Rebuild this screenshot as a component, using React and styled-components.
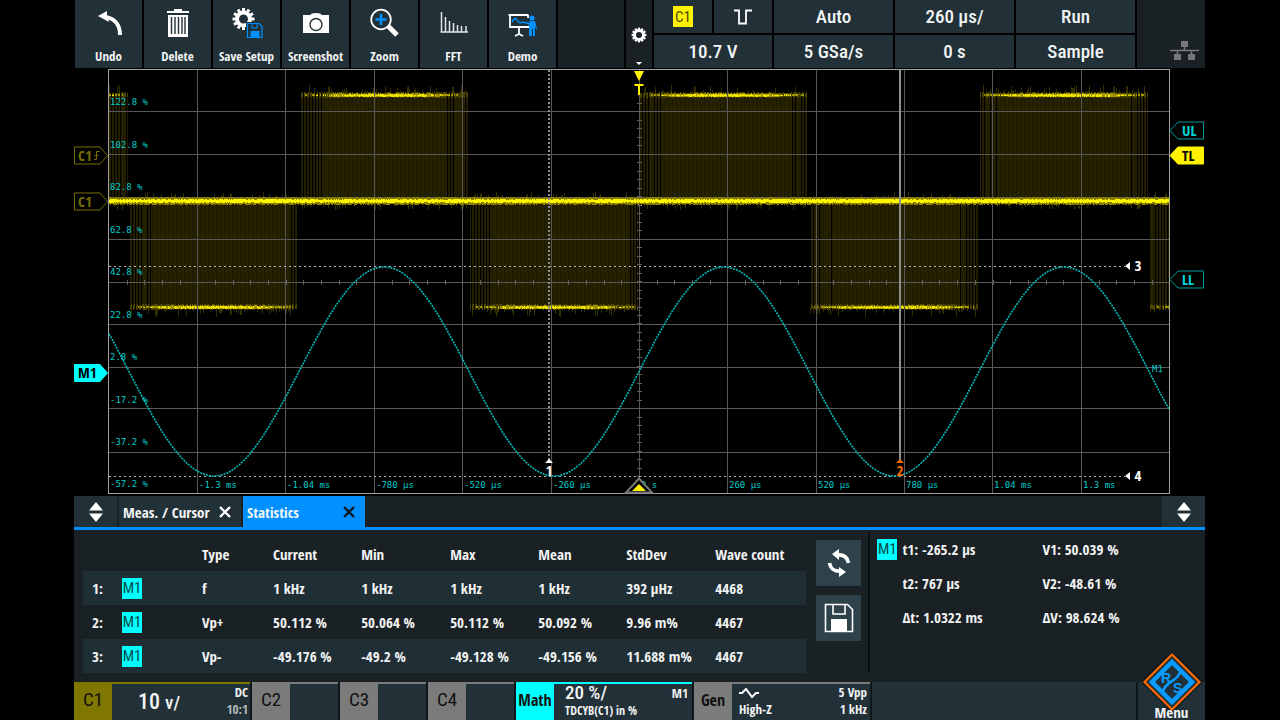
import React from "react";
import styled, { createGlobalStyle, css } from "styled-components";

const CYAN = "#00ffff";
const YELLOW = "#fff200";
const BLUE = "#0090ff";
const TILE = "#223138";
const DARK = "#1a2124";

const GlobalStyle = createGlobalStyle`
  * {
    box-sizing: border-box;
  }
  body {
    margin: 0;
    background: #000;
    color: #f2f4f4;
    font-family: "Open Sans Condensed", "Roboto Condensed", "Liberation Sans Narrow", "Open Sans", sans-serif;
  }
  button {
    margin: 0;
    padding: 0;
    border: none;
    color: inherit;
    font: inherit;
    cursor: pointer;
  }
`;

// ---------- icons ----------

const gearTeeth = (cx, cy, r, count, size) =>
  Array.from({ length: count }, (_, i) => (
    <rect
      key={i}
      x={cx - size / 2}
      y={cy - r}
      width={size}
      height={size}
      fill="#fff"
      transform={`rotate(${(360 / count) * i} ${cx} ${cy})`}
    />
  ));

const UndoIcon = () => (
  <Icon viewBox="0 0 36 32">
    <path d="M7 8 16 3v4l2 7z" fill="#fff" />
    <path d="M14 9C23 10 29 16 29 27" fill="none" stroke="#fff" strokeWidth="4" />
  </Icon>
);

const DeleteIcon = () => (
  <Icon viewBox="0 0 36 32">
    <path d="M7 3h7V1h8v2h7v2H7zM8 7h20v22H8z" fill="#fff" />
    <path d="M11.5 9v17M15 9v17M18.500 9v17M22 9v17M25 9v17" stroke={TILE} strokeWidth="1.4" />
  </Icon>
);

const SaveSetupIcon = () => (
  <Icon viewBox="0 0 36 32">
    <circle cx="14.500" cy="11" r="6.500" fill="none" stroke="#fff" strokeWidth="4" />
    {gearTeeth(14.5, 11, 11, 12, 3)}
    <path d="M17 14h17v17H17z" fill={TILE} />
    <path d="M18.500 15.500h11.500l3 3v11h-14.500z" fill="none" stroke={BLUE} strokeWidth="1.2" />
    <path d="M21.500 23h9v7h-9z" fill={BLUE} />
    <path d="M23 16v4h5v-4" fill="none" stroke={BLUE} />
  </Icon>
);

const CameraIcon = () => (
  <Icon viewBox="0 0 36 32">
    <path d="M5 7h7l2-1.500q4-1 8 0l2 1.500h7v18H5z" fill="#fff" />
    <circle cx="18" cy="16.500" r="6" fill="none" stroke={TILE} strokeWidth="1.400" />
  </Icon>
);

const ZoomIcon = () => (
  <Icon viewBox="0 0 36 32">
    <circle cx="14" cy="11.500" r="9.800" fill="none" stroke="#fff" strokeWidth="1.800" />
    <path d="M14 6v11M8.500 11.500h11" stroke={BLUE} strokeWidth="2.600" />
    <path d="M21 18l9 9" stroke="#fff" strokeWidth="5" />
  </Icon>
);

const FftIcon = () => (
  <Icon viewBox="0 0 36 32">
    <path
      d="M5.500 4v20M9.500 9v15M13.500 13v11M17.500 15v9M21.500 17v7M25.500 18v6M30 18v6M4.500 24h27.500"
      fill="none"
      stroke="#e4e8e8"
      strokeWidth="1.500"
    />
  </Icon>
);

const DemoIcon = () => (
  <Icon viewBox="0 0 36 32">
    <path d="M3.500 7h20M5 7v12h19M23 7v3M14 19v8M10 28l4-2 4 2" fill="none" stroke="#fff" strokeWidth="1.800" />
    <path d="M7 14q3-6 5-2t6 2l7 2" fill="none" stroke={BLUE} strokeWidth="1.500" />
    <circle cx="27" cy="10" r="2.600" fill={BLUE} />
    <path d="M21 14l3 1 1-2h5l2 8h-1l-1-3v10h-2v-7h-1v7h-3V17z" fill={BLUE} />
  </Icon>
);

const SettingsIcon = () => (
  <GearSvg viewBox="0 0 26 68" aria-hidden="true">
    <circle cx="13" cy="35" r="4.500" fill="none" stroke="#fff" strokeWidth="3" />
    {gearTeeth(13, 35, 7.4, 12, 2.2)}
    <path d="M10 62h6l-3 3z" fill="#fff" />
  </GearSvg>
);

const FloppyIcon = () => (
  <svg width="30" height="30" viewBox="0 0 30 30">
    <path d="M1.500 1.500h22l5 5v22h-27z" fill="none" stroke="#fff" strokeWidth="1.600" />
    <path d="M9 2v9h12V2" fill="none" stroke="#fff" strokeWidth="1.600" />
    <path d="M7 16h16v13H7z" fill="#fff" />
  </svg>
);

const RefreshIcon = () => (
  <svg width="26" height="28" viewBox="0 0 26 28">
    <path d="M11 6Q21 5 22.500 14M15 22Q5 23 3.500 14" fill="none" stroke="#fff" strokeWidth="3.600" />
    <path d="M6 5l7-5v11zM20 23l-7-5v10z" fill="#fff" />
  </svg>
);

const NetworkIcon = () => (
  <svg width="29" height="19" viewBox="0 0 29 19">
    <path d="M11 0h7v6h-7zM4 13h7v6H4zM18 13h7v6h-7z" fill="#777" />
    <path d="M0 9.500h29M14.500 5v4M7.500 9v5M21.500 9v5" stroke="#777" strokeWidth="1.600" />
  </svg>
);

const UpDownIcon = () => (
  <svg width="16" height="20" viewBox="0 0 16 20">
    <path d="M8 0l7 8.500H1zM8 20l7-8.500H1z" fill="#fff" />
  </svg>
);

const CloseIcon = () => (
  <svg width="12" height="12" viewBox="0 0 12 12">
    <path d="M1 1l10 10M11 1L1 11" stroke="currentColor" strokeWidth="2.400" />
  </svg>
);

const PulseIcon = () => (
  <svg width="18" height="18" viewBox="0 0 18 18">
    <path d="M0 2.500h5v13h7v-13h6" fill="none" stroke="#fff" strokeWidth="1.800" />
  </svg>
);

const WaveIcon = () => (
  <svg width="20" height="12" viewBox="0 0 20 12">
    <path d="M0 6h3l4-4 6 8 4-4h3" fill="none" stroke="#fff" strokeWidth="2" />
  </svg>
);

const LogoIcon = () => (
  <Logo viewBox="0 0 64 64" aria-hidden="true">
    <path d="M32 1L63 32 32 63 1 32z" fill="#12191c" />
    <path d="M32 4.500L59.500 32 32 59.500 4.500 32z" fill={TILE} stroke="#ff6a00" strokeWidth="2.200" />
    <path d="M32 12L52 32 32 52 12 32z" fill="none" stroke="#0a9bff" strokeWidth="4.500" />
    <path d="M41 20Q39 27 32 31T22 43" fill="none" stroke="#0a9bff" strokeWidth="2.600" />
    <text x="21" y="33" fontSize="14" fontWeight="bold" fontFamily="Liberation Sans, sans-serif" fill="#0a9bff">R</text>
    <text x="33" y="43" fontSize="14" fontWeight="bold" fontFamily="Liberation Sans, sans-serif" fill="#0a9bff">S</text>
  </Logo>
);

// ---------- waveform ----------

const LEFT = 109;
const RIGHT = 1169;
const CENTER = 639;
const PERIOD = 340;
const VLINES = [197, 285, 374, 462, 551, 639, 727, 816, 904, 992, 1081];
const HLINES = [111, 154, 197, 239, 282, 324, 367, 408, 452];
const XLABELS = ["-1.3 ms", "-1.04 ms", "-780 µs", "-520 µs", "-260 µs", "0 s", "260 µs", "520 µs", "780 µs", "1.04 ms", "1.3 ms"];
const YLABELS = ["122.8 %", "102.8 %", "82.8 %", "62.8 %", "42.8 %", "22.8 %", "2.8 %", "-17.2 %", "-37.2 %", "-57.2 %"];
const YLABEL_Y = [105, 148, 190, 233, 275, 318, 360, 403, 445, 487];

// repeatable noise
const rand = (n) => {
  const v = Math.sin(n * 12.9898) * 43758.5453;
  return v - Math.floor(v);
};

const buildTrace = () => {
  const t = { fill: "", stripe: "", weak: "", mid: "", strong: "", spikes: "", base: "", baseEdge: "" };
  for (let x = LEFT; x < RIGHT; x++) {
    const phase = (((x - CENTER) % (PERIOD / 2)) + PERIOD / 2) % (PERIOD / 2);
    const positive = Math.floor((x - CENTER) / (PERIOD / 2)) % 2 === 0;
    const level = positive ? 95 : 307;
    const dir = positive ? -1 : 1;
    const r = rand(x);
    const px = x + 0.5;

    if (phase > 0 && phase < 169) {
      const edge = Math.min(phase, 169 - phase);
      const gap = edge < 24 && x % 3 === 0 && r > edge / 40;
      const dim = edge < 16 ? x % 3 === 1 : x % 4 === 0;
      if (!gap) {
        t[dim ? "stripe" : "fill"] += `M${px} 201V${level}`;
      }
      const bright = Math.sin((phase / 169) * Math.PI);
      if (!gap) {
        t.weak += `M${px} ${level - 2 - Math.round(r)}V${level + 2 + Math.round(rand(x + 2))}`;
      }
      if (edge > 4 && rand(x + 11) < 0.35 + bright) {
        t.mid += `M${px} ${level - 1 - Math.round(r * bright)}V${level + 1 + Math.round(bright)}`;
      }
      if (edge > 14 && r < bright) {
        t.strong += `M${px} ${level - Math.round(rand(x + 7) * bright * 1.4)}V${level + 1 + Math.round(rand(x + 5) * bright)}`;
      }
      if (rand(x + 99) > 0.8) {
        t.spikes += `M${px} ${level}v${dir * (3 + Math.round(r * 7))}`;
      }
      if (rand(x + 33) > 0.84) {
        t.spikes += `M${px} 201v${-dir * (4 + Math.round(r * 5))}`;
      }
    }
    t.base += `M${px} ${199 + Math.round(r * 0.7)}V${203 - Math.round(rand(x + 3) * 0.7)}`;
    t.baseEdge += `M${px} ${198 - Math.round(r * 1.2)}V${204 + Math.round(rand(x + 1) * 1.2)}`;
  }
  return t;
};

const buildSine = () => {
  let d = "";
  for (let x = LEFT; x <= RIGHT; x += 2) {
    const y = 371.5 - 104.5 * Math.sin(((x - CENTER) / PERIOD) * 2 * Math.PI);
    d += `${x === LEFT ? "M" : "L"}${x} ${y.toFixed(1)}`;
  }
  return d;
};

const trace = buildTrace();
const sine = buildSine();

const hTicks = Array.from({ length: 59 }, (_, i) => `M${Math.round(LEFT + 17.67 * (i + 1))}.5 280v5`).join("");
const vTicks = Array.from({ length: 46 }, (_, i) => `M637 ${Math.round(103 + 8.48 * i)}.5h5`).join("");

const LeftTag = ({ y, text, color, filled, slope }) => (
  <g>
    <path
      d={`M74.500 ${y - 8.5}H100L107.500 ${y}L100 ${y + 8.5}H74.500z`}
      fill={filled ? color : "#000"}
      stroke={color}
    />
    <TagText x="78" y={y + 5} $color={filled ? "#000" : color}>
      {text}
    </TagText>
    {slope && <path d={`M94 ${y + 4}h2.500v-8h3M94.500 ${y}h4`} fill="none" stroke={color} />}
  </g>
);

const RightTag = ({ y, text, color, filled }) => (
  <g>
    <path
      d={`M1203.500 ${y - 8.5}H1178L1170 ${y}L1178 ${y + 8.5}H1203.500z`}
      fill={filled ? color : "#000"}
      stroke={filled ? color : "#009a9a"}
    />
    <TagText x="1182" y={y + 5} $color={filled ? "#000" : "#00d8d8"}>
      {text}
    </TagText>
  </g>
);

const Waveform = () => (
  <Plot viewBox="74 68 1131 428" role="img" aria-label="Waveform display">
    <g fill="none" shapeRendering="crispEdges">
      <path d={trace.fill} stroke="#262100" />
      <path d={trace.stripe} stroke="#1f1b00" />
      <path d={trace.spikes} stroke="#332e00" />
      <path d={trace.weak} stroke="#4a4400" />
      <path d={trace.mid} stroke="#a09400" />
      <path d={trace.strong} stroke="#f2e600" />
      {VLINES.map((x) => (
        <path key={x} d={`M${x}.5 70V493`} stroke="#585858" />
      ))}
      {HLINES.map((y) => (
        <path key={y} d={`M109 ${y}.5H1169`} stroke="#585858" />
      ))}
      <path d={hTicks + vTicks} stroke="#606060" />
      <path d={trace.baseEdge} stroke="#8a8000" />
      <path d={trace.base} stroke="#fff600" />
      <path d="M109 266.500H1125M109 476.500H1125" stroke="#b8b8b8" strokeDasharray="2 3" />
      <path d="M549 70V460" stroke="#8e8e8e" strokeWidth="2" strokeDasharray="2 2" />
      <path d="M900 70V460" stroke="#8e8e8e" strokeWidth="2" />
      <path d="M108.500 69.500H1169.500V493.500H108.500z" stroke="#a0a0a0" />
    </g>
    <path d={sine} fill="none" stroke="#00bcbc" strokeWidth="1.600" strokeDasharray="2 1" />

    {YLABELS.map((label, i) => (
      <ScaleText key={label} x="110" y={YLABEL_Y[i]}>
        {label}
      </ScaleText>
    ))}
    {XLABELS.map((label, i) => (
      <ScaleText key={label} x={VLINES[i] + 2} y="488">
        {label}
      </ScaleText>
    ))}
    <ScaleText x="1152" y="372">
      M1
    </ScaleText>

    <path d="M634 71h10l-5 10z" fill={YELLOW} />
    <path d="M634.500 85h9M639 85v10" stroke={YELLOW} strokeWidth="2" />
    <path d="M639 478.500L652 492.500H626z" fill="#000" stroke="#777" strokeWidth="2" />
    <path d="M639 484l7 7h-14z" fill={YELLOW} />

    <path d="M545 463l4-4 4 4z" fill="#fff" />
    <CursorText x="549" y="476">1</CursorText>
    <path d="M896 463l4-4 4 4z" fill="#ff6a00" />
    <CursorText x="900" y="476" $color="#ff6a00">2</CursorText>
    <path d="M1130 262v8l-5-4z" fill="#fff" />
    <CursorText x="1138" y="271">3</CursorText>
    <path d="M1130 472v8l-5-4z" fill="#fff" />
    <CursorText x="1138" y="481">4</CursorText>

    <LeftTag y={155.5} text="C1" color="#766e00" slope />
    <LeftTag y={201.5} text="C1" color="#766e00" />
    <LeftTag y={373} text="M1" color={CYAN} filled />
    <RightTag y={130.5} text="UL" color={CYAN} />
    <RightTag y={155.5} text="TL" color={YELLOW} filled />
    <RightTag y={279.5} text="LL" color={CYAN} />
  </Plot>
);

// ---------- data ----------

const TOOLS = [
  { label: "Undo", icon: <UndoIcon /> },
  { label: "Delete", icon: <DeleteIcon /> },
  { label: "Save Setup", icon: <SaveSetupIcon /> },
  { label: "Screenshot", icon: <CameraIcon /> },
  { label: "Zoom", icon: <ZoomIcon /> },
  { label: "FFT", icon: <FftIcon /> },
  { label: "Demo", icon: <DemoIcon /> },
];

const HEADERS = ["Type", "Current", "Min", "Max", "Mean", "StdDev", "Wave count"];

const ROWS = [
  ["f", "1 kHz", "1 kHz", "1 kHz", "1 kHz", "392 µHz", "4468"],
  ["Vp+", "50.112 %", "50.064 %", "50.112 %", "50.092 %", "9.96 m%", "4467"],
  ["Vp-", "-49.176 %", "-49.2 %", "-49.128 %", "-49.156 %", "11.688 m%", "4467"],
];

const CURSOR_VALUES = [
  ["t1: -265.2 µs", "V1: 50.039 %"],
  ["t2: 767 µs", "V2: -48.61 %"],
  ["Δt: 1.0322 ms", "ΔV: 98.624 %"],
];

const App = () => {
  const [tab, setTab] = React.useState("Statistics");
  return (
    <>
      <GlobalStyle />
      <Screen>
        <Toolbar>
          {TOOLS.map((tool) => (
            <ToolButton key={tool.label}>
              {tool.icon}
              {tool.label}
            </ToolButton>
          ))}
          <DarkCell />
          <SettingsButton aria-label="Toolbar settings">
            <SettingsIcon />
          </SettingsButton>
          <StatusCell>
            <Badge $color={YELLOW}>C1</Badge>
          </StatusCell>
          <StatusCell aria-label="Trigger slope">
            <PulseIcon />
          </StatusCell>
          <StatusCell>Auto</StatusCell>
          <StatusCell>260 µs/</StatusCell>
          <StatusCell>Run</StatusCell>
          <NetworkCell>
            <NetworkIcon />
          </NetworkCell>
          <StatusCell $wide>10.7 V</StatusCell>
          <StatusCell>5 GSa/s</StatusCell>
          <StatusCell>0 s</StatusCell>
          <StatusCell>Sample</StatusCell>
        </Toolbar>

        <Waveform />

        <TabBar>
          <ScrollButton aria-label="Resize left">
            <UpDownIcon />
          </ScrollButton>
          {["Meas. / Cursor", "Statistics"].map((name) => (
            <Tab key={name} $active={tab === name}>
              <TabName onClick={() => setTab(name)}>{name}</TabName>
              <CloseButton aria-label={`Close ${name}`} $active={tab === name}>
                <CloseIcon />
              </CloseButton>
            </Tab>
          ))}
          <Spacer />
          <ScrollButton aria-label="Resize right">
            <UpDownIcon />
          </ScrollButton>
        </TabBar>

        <Panel>
          <StatsArea>
            <StatsTable>
              <colgroup>
                {[39, 80, 71, 88, 89, 88, 88, 89, 91].map((w, i) => (
                  <Col key={i} $w={w} />
                ))}
              </colgroup>
              <thead>
                <tr>
                  <Th colSpan={2} />
                  {HEADERS.map((h) => (
                    <Th key={h}>{h}</Th>
                  ))}
                </tr>
              </thead>
              <tbody>
                {ROWS.map((row, i) => (
                  <Row key={row[0]}>
                    <IndexCell>{i + 1}:</IndexCell>
                    <Td>
                      <Badge $color={CYAN}>M1</Badge>
                    </Td>
                    {row.map((value, idx) => (
                      <Td key={idx}>{value}</Td>
                    ))}
                  </Row>
                ))}
              </tbody>
            </StatsTable>
            <Actions>
              <ActionButton aria-label="Reset statistics">
                <RefreshIcon />
              </ActionButton>
              <ActionButton aria-label="Save statistics">
                <FloppyIcon />
              </ActionButton>
            </Actions>
          </StatsArea>
          <CursorArea>
            {CURSOR_VALUES.map(([t, v], i) => (
              <React.Fragment key={t}>
                <BadgeSlot>{i === 0 && <Badge $color={CYAN}>M1</Badge>}</BadgeSlot>
                <span>{t}</span>
                <span>{v}</span>
              </React.Fragment>
            ))}
          </CursorArea>
        </Panel>

        <ChannelBar>
          <Channel $color="#7f7700">
            <ChannelName $color="#7f7700">C1</ChannelName>
            <ChannelBody>
              <Scale>
                10 <Unit>v/</Unit>
              </Scale>
              <Side>
                <span>DC</span>
                <Probe>10:1</Probe>
              </Side>
            </ChannelBody>
          </Channel>
          {["C2", "C3", "C4"].map((name) => (
            <Channel key={name} $color="#7b7b7b">
              <ChannelName $color="#7b7b7b">{name}</ChannelName>
            </Channel>
          ))}
          <Channel $color={CYAN}>
            <ChannelName $color={CYAN} $small>
              Math
            </ChannelName>
            <MathBody>
              <MathLine>
                <MathScale>20 %/</MathScale>
                <span>M1</span>
              </MathLine>
              <Formula>TDCYB(C1) in %</Formula>
            </MathBody>
          </Channel>
          <Channel $color="#7b7b7b">
            <ChannelName $color="#7b7b7b" $small>
              Gen
            </ChannelName>
            <GenBody>
              <WaveIcon />
              <Right>5 Vpp</Right>
              <span>High-Z</span>
              <Right>1 kHz</Right>
            </GenBody>
          </Channel>
          <Blank />
          <MenuButton>
            <LogoIcon />
            <MenuLabel>Menu</MenuLabel>
          </MenuButton>
        </ChannelBar>
      </Screen>
    </>
  );
};

const Screen = styled.main`
  display: flex;
  flex-direction: column;
  min-height: 100vh;
  padding: 0 75px 0 74px;
`;
const Toolbar = styled.div`
  display: grid;
  grid-template-columns: repeat(7, 67fr) 66fr 26fr 58fr 58fr repeat(3, 119fr) 68fr;
  grid-template-rows: 33px 33px;
  gap: 2px;
  padding-left: 1px;
`;
const ToolButton = styled.button`
  display: flex;
  flex-direction: column;
  align-items: center;
  grid-row: span 2;
  gap: 8px;
  padding-top: 8px;
  background: ${TILE};
  font-size: 13px;
  font-weight: 600;
  line-height: 16px;
  white-space: nowrap;
`;
const Icon = styled.svg`
  width: 36px;
  height: 32px;
  flex: none;
`;
const DarkCell = styled.div`
  grid-row: span 2;
  background: ${DARK};
`;
const SettingsButton = styled.button`
  grid-row: span 2;
  background: ${DARK};
`;
const GearSvg = styled.svg`
  display: block;
  width: 100%;
  height: 68px;
`;
const StatusCell = styled.button`
  display: flex;
  justify-content: center;
  align-items: center;
  background: ${TILE};
  font-family: "Roboto Condensed", "Open Sans Condensed", sans-serif;
  font-size: 19px;
  font-weight: 500;
  line-height: 24px;
  ${(props) =>
    props.$wide &&
    css`
      grid-column: span 2;
    `}
`;
const NetworkCell = styled.div`
  display: flex;
  justify-content: flex-end;
  align-items: flex-end;
  grid-row: span 2;
  padding: 0 6px 8px 0;
  background: ${DARK};
`;
const Badge = styled.span`
  display: inline-flex;
  justify-content: center;
  align-items: center;
  width: 20px;
  height: 21px;
  background: ${(props) => props.$color};
  color: ${(props) => (props.$color === YELLOW ? "#4a4600" : "#004a4a")};
  font-family: "Roboto Condensed", "Open Sans Condensed", sans-serif;
  font-size: 15px;
  font-weight: 400;
  line-height: 20px;
`;
const Plot = styled.svg`
  display: block;
  width: 100%;
  height: auto;
`;
const ScaleText = styled.text`
  fill: #00cccc;
  font-family: "DejaVu Sans Mono", monospace;
  font-size: 9px;
  white-space: pre;
`;
const TagText = styled.text`
  fill: ${(props) => props.$color};
  font-size: 15px;
  font-weight: 700;
`;
const CursorText = styled.text`
  fill: ${(props) => props.$color || "#fff"};
  font-size: 15px;
  font-weight: 600;
  text-anchor: middle;
`;
const TabBar = styled.div`
  display: flex;
  gap: 2px;
  height: 34px;
  border-bottom: 3px solid ${BLUE};
  background: ${DARK};
`;
const ScrollButton = styled.button`
  display: flex;
  justify-content: center;
  align-items: center;
  width: 43px;
  background: ${TILE};
`;
const Tab = styled.div`
  display: flex;
  align-items: center;
  width: 122px;
  padding: 0 10px 0 4px;
  background: ${(props) => (props.$active ? BLUE : TILE)};
`;
const TabName = styled.button`
  flex: 1;
  background: none;
  font-size: 15px;
  font-weight: 600;
  line-height: 24px;
  text-align: left;
  white-space: nowrap;
`;
const CloseButton = styled.button`
  display: flex;
  background: none;
  color: ${(props) => (props.$active ? "#101820" : "#fff")};
`;
const Spacer = styled.div`
  flex: 1;
`;
const Panel = styled.section`
  display: flex;
  flex: 1;
  background: ${DARK};
  font-size: 15px;
  font-weight: 500;
  line-height: 20px;
`;
const StatsArea = styled.div`
  display: flex;
  flex: 796;
  gap: 10px;
  margin: 2px 0 9px;
  padding: 6px 7px 0 9px;
  border-right: 2px solid #0a0f11;
`;
const StatsTable = styled.table`
  flex: 1;
  table-layout: fixed;
  border-collapse: collapse;
`;
const Col = styled.col`
  width: ${(props) => props.$w}px;
`;
const Th = styled.th`
  height: 33px;
  padding: 0 0 2px;
  font-weight: 500;
  text-align: left;
  white-space: nowrap;
`;
const Row = styled.tr`
  &:nth-child(odd) {
    background: #202e35;
  }
`;
const Td = styled.td`
  height: 34px;
  padding: 0;
  white-space: nowrap;
`;
const IndexCell = styled(Td)`
  padding-left: 9px;
`;
const Actions = styled.div`
  display: flex;
  flex-direction: column;
  gap: 9px;
  padding-top: 2px;
`;
const ActionButton = styled.button`
  display: flex;
  justify-content: center;
  align-items: center;
  width: 45px;
  height: 46px;
  background: #2d424b;
`;
const CursorArea = styled.div`
  display: grid;
  flex: 335;
  grid-template-columns: 25px 140px 1fr;
  grid-auto-rows: 34px;
  align-items: center;
  padding: 2px 0 0 7px;
  white-space: nowrap;
`;
const BadgeSlot = styled.span`
  display: flex;
`;
const ChannelBar = styled.footer`
  display: grid;
  grid-template-columns: 176fr repeat(3, 86fr) repeat(2, 176fr) 264fr 67fr;
  gap: 2px;
  height: 38px;
  background: #10171a;
`;
const Channel = styled.button`
  display: flex;
  min-width: 0;
  border-top: 2px solid ${(props) => props.$color};
  background: ${TILE};
  text-align: left;
`;
const ChannelName = styled.span`
  display: flex;
  justify-content: center;
  width: 38px;
  height: 100%;
  background: ${(props) => props.$color};
  color: #111;
  line-height: 32px;
  ${(props) =>
    props.$small
      ? css`
          font-size: 16px;
          font-weight: 600;
        `
      : css`
          font-family: "Roboto Condensed", "Open Sans Condensed", sans-serif;
          font-size: 19px;
          font-weight: 400;
        `}
`;
const ChannelBody = styled.span`
  display: flex;
  flex: 1;
  justify-content: space-between;
  padding: 0 2px 0 26px;
`;
const Scale = styled.span`
  font-family: "Roboto Condensed", "Open Sans Condensed", sans-serif;
  font-size: 22px;
  font-weight: 500;
  line-height: 36px;
`;
const Unit = styled.span`
  font-size: 19px;
`;
const Side = styled.span`
  display: flex;
  flex-direction: column;
  align-items: flex-end;
  font-size: 13px;
  font-weight: 600;
  line-height: 17px;
`;
const Probe = styled.span`
  color: #b4babc;
  font-weight: 400;
`;
const MathBody = styled.span`
  display: flex;
  flex: 1;
  flex-direction: column;
  padding: 0 4px 0 11px;
  font-size: 13px;
  font-weight: 600;
  white-space: nowrap;
`;
const MathLine = styled.span`
  display: flex;
  justify-content: space-between;
  line-height: 18px;
`;
const MathScale = styled.span`
  font-family: "Roboto Condensed", "Open Sans Condensed", sans-serif;
  font-size: 19px;
  font-weight: 500;
`;
const Formula = styled.span`
  font-size: 12px;
  line-height: 17px;
`;
const GenBody = styled.span`
  display: grid;
  flex: 1;
  grid-template-columns: auto auto;
  align-items: center;
  align-content: start;
  padding: 0 3px 0 7px;
  font-size: 13px;
  font-weight: 600;
  line-height: 17px;
`;
const Right = styled.span`
  text-align: right;
`;
const Blank = styled.div`
  background: ${TILE};
`;
const MenuButton = styled.button`
  position: relative;
  display: flex;
  justify-content: center;
  align-items: flex-end;
  background: ${TILE};
  font-size: 15px;
  font-weight: 600;
  line-height: 18px;
`;
const MenuLabel = styled.span`
  position: relative;
  z-index: 1;
`;
const Logo = styled.svg`
  position: absolute;
  top: -32px;
  left: calc(50% - 32px);
  width: 64px;
  height: 64px;
  z-index: 0;
`;

export default App;
